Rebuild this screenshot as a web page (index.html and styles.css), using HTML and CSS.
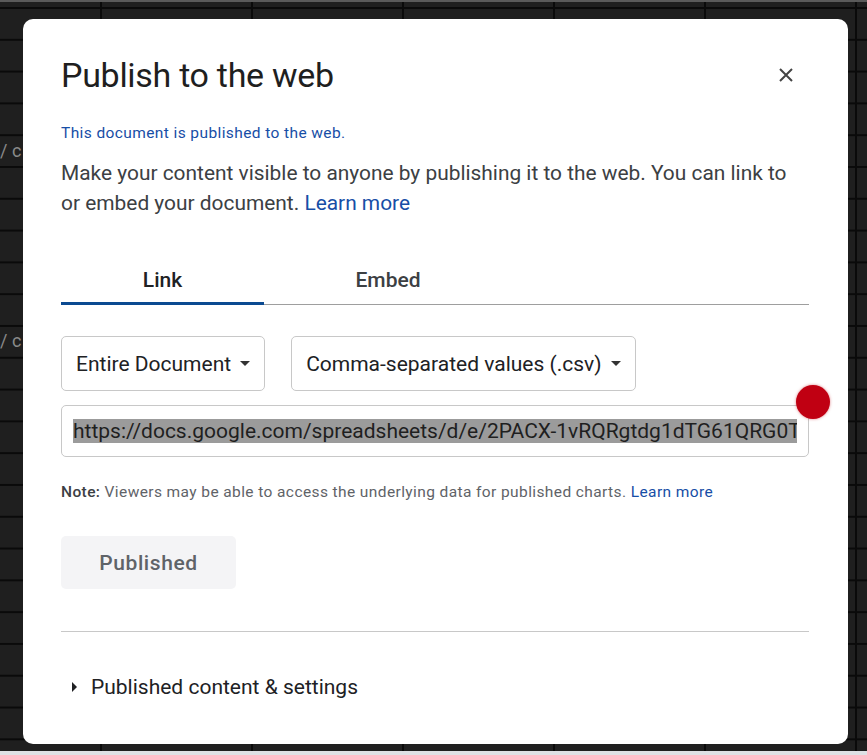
FILE: index.html
```html
<!DOCTYPE html>
<html lang="en">
<head>
    <meta charset="UTF-8">
    <meta name="viewport" content="width=device-width, initial-scale=1.0">
    <title>Publish to the web</title>
    <link rel="stylesheet" href="styles.css">
</head>
<body>

<span class="cell-text cell-a">/ c</span>
<span class="cell-text cell-b">/ c</span>

<div class="dialog">
    <div class="dialog-header">
        <h1>Publish to the web</h1>
        <button class="close" aria-label="Close">
            <svg width="16" height="16" viewBox="0 0 16 16"><path d="M2 2 L14 14 M14 2 L2 14" stroke="#444" stroke-width="2" fill="none"/></svg>
        </button>
    </div>

    <p class="status">This document is published to the web.</p>
    <p class="intro">Make your content visible to anyone by publishing it to the web. You can link to or embed your document. <a href="#">Learn more</a></p>

    <div class="tabs">
        <div class="tab active">Link</div>
        <div class="tab">Embed</div>
    </div>

    <div class="selects">
        <div class="select">Entire Document <span class="caret"></span></div>
        <div class="select">Comma-separated values (.csv) <span class="caret"></span></div>
    </div>

    <div class="url-box">
        <div class="url-clip">
            <span class="url">https://docs.google.com/spreadsheets/d/e/2PACX-1vRQRgtdg1dTG61QRG0TkxZ</span>
        </div>
    </div>

    <p class="note"><b>Note:</b> Viewers may be able to access the underlying data for published charts. <a href="#">Learn more</a></p>

    <div class="published">Published</div>

    <hr class="divider">

    <div class="expander"><span class="arrow"></span>Published content &amp; settings</div>

    <div class="dot"></div>
</div>

</body>
</html>
```

FILE: styles.css
```css
/* fondo de hoja de calculo */
html {
    background: #dfe1e5;
}
body {
    margin: 0;
    height: 751px;
    padding: 17px 0 0 23px;
    box-sizing: border-box;
    font-family: Roboto, 'Liberation Sans', sans-serif;
    background-color: #1f1f1f;
    background-image:
        linear-gradient(to bottom, #0a0a0a 2px, transparent 2px),
        linear-gradient(to right, #0a0a0a 2px, transparent 2px);
    background-size: 100% 31.8px, 151px 100%;
    background-position: 0 5px, 100px 0;
    border-top: 2px solid #5a5a5a;
    position: relative;
}
.cell-text {
    position: absolute;
    left: 0;
    color: #8a8a8a;
    font-size: 18px;
}
.cell-a { top: 138px; }
.cell-b { top: 328px; }

/* dialogo */
.dialog {
    position: relative;
    width: 825px;
    height: 725px;
    box-sizing: border-box;
    background: #fff;
    border-radius: 10px;
    padding: 36px 39px 0 38px;
    color: #202124;
}
.dialog-header {
    display: flex;
    justify-content: space-between;
    align-items: center;
}
h1 {
    margin: 0;
    font-size: 34px;
    font-weight: 400;
    line-height: 40px;
    color: #1f1f1f;
    letter-spacing: -0.3px;
}
.close {
    background: none;
    border: none;
    padding: 0;
    margin-right: 15px;
    width: 16px;
    height: 16px;
    display: flex;
}
.status {
    margin: 28px 0 0;
    font-size: 15.5px;
    letter-spacing: 0.4px;
    line-height: 20px;
    color: #174ea6;
}
.intro {
    margin: 15px 0 0;
    font-size: 20.9px;
    line-height: 30px;
    color: #3c4043;
}
a {
    color: #174ea6;
    text-decoration: none;
}

/* pestañas */
.tabs {
    display: flex;
    margin-top: 50px;
    border-bottom: 1px solid #9e9e9e;
}
.tab {
    font-size: 21px;
    font-weight: 500;
    line-height: 24px;
    padding-bottom: 10px;
    border-bottom: 3px solid transparent;
    margin-bottom: -1px;
    text-align: center;
    color: #3c4043;
}
.tab:first-child {
    width: 203px;
}
.tab:last-child {
    width: 248px;
}
.tab.active {
    border-bottom-color: #0b4a91;
    color: #202124;
}

/* selectores */
.selects {
    display: flex;
    gap: 26px;
    margin-top: 31px;
}
.select {
    height: 55px;
    box-sizing: border-box;
    border: 1px solid #c8c8c8;
    border-radius: 5px;
    padding: 0 14px 0 14px;
    display: flex;
    align-items: center;
    gap: 9px;
    font-size: 21px;
    color: #202124;
}
.caret {
    width: 0;
    height: 0;
    border-left: 5px solid transparent;
    border-right: 5px solid transparent;
    border-top: 5px solid #333;
}
.url-box {
    margin-top: 14px;
    height: 52px;
    box-sizing: border-box;
    border: 1px solid #c8c8c8;
    border-radius: 5px;
    padding: 0 11px;
    display: flex;
    align-items: center;
}
.url-clip {
    flex: 1;
    overflow: hidden;
    white-space: nowrap;
}
.url {
    font-size: 21px;
    line-height: 24px;
    background: #9b9b9b;
    color: #1f1f1f;
}
.note {
    margin: 25px 0 0;
    font-size: 15.5px;
    letter-spacing: 0.4px;
    line-height: 20px;
    color: #5f6368;
}
.note b {
    color: #3c4043;
    font-weight: 500;
}
.published {
    margin-top: 34px;
    width: 175px;
    height: 53px;
    background: #f4f4f6;
    border-radius: 5px;
    display: flex;
    align-items: center;
    justify-content: center;
    font-size: 21px;
    letter-spacing: 0.6px;
    font-weight: 500;
    color: #5f6368;
}
.divider {
    margin: 42px 0 0;
    border: none;
    border-top: 1px solid #c8c8c8;
}
.expander {
    margin-top: 43px;
    display: flex;
    align-items: center;
    font-size: 21px;
    line-height: 24px;
    color: #202124;
}
.arrow {
    width: 0;
    height: 0;
    border-top: 5px solid transparent;
    border-bottom: 5px solid transparent;
    border-left: 5px solid #202124;
    margin: 0 14px 0 11px;
}

/* punto rojo encima del campo */
.dot {
    position: absolute;
    left: 773px;
    top: 366px;
    width: 34px;
    height: 34px;
    border-radius: 50%;
    background: #c00012;
    box-shadow: 0 0 3px rgba(192, 0, 18, 0.5);
}
```
